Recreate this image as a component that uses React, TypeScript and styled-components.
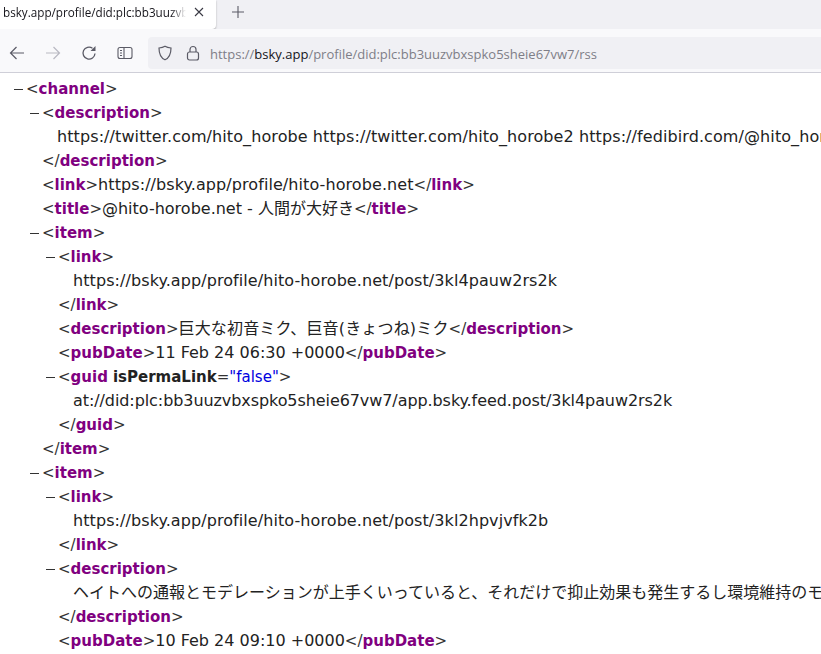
import React from "react";
import styled, { createGlobalStyle } from "styled-components";

const Global = createGlobalStyle`
  html, body { margin: 0; padding: 0; background: #fff; }
  body { width: 821px; height: 654px; overflow: hidden; }
`;

const Page = styled.div`
  width: 821px;
  height: 654px;
  overflow: hidden;
  display: flex;
  flex-direction: column;
  font-family: "Open Sans", "Liberation Sans", sans-serif;
`;

const TabStrip = styled.div`
  height: 29px;
  flex: none;
  display: flex;
  align-items: flex-start;
  background: #f0f0f4;
`;

const Tab = styled.div`
  width: 216px;
  height: 29px;
  background: #fff;
  border-radius: 0 0 4px 0;
  box-shadow: 0 1px 2px rgba(0, 0, 0, 0.3);
  display: flex;
  align-items: center;
  padding: 0 11px 6px 3px;
  box-sizing: border-box;
  gap: 7px;
`;

const TabTitle = styled.div`
  flex: 1;
  overflow: hidden;
  white-space: nowrap;
  font-size: 11.7px;
  color: #15141a;
  mask-image: linear-gradient(to right, #000 92%, transparent);
`;

const NewTab = styled.button`
  border: 0;
  background: none;
  padding: 0;
  margin: 4px 0 0 14px;
  width: 16px;
  height: 16px;
  display: flex;
  color: #5b5b66;
`;

const Toolbar = styled.div`
  height: 44px;
  flex: none;
  display: flex;
  align-items: center;
  background: #f9f9fb;
  border-bottom: 1px solid #cfcfd8;
  box-sizing: border-box;
  padding: 4px 0 0 9px;
`;

const NavButton = styled.div<{ $faded?: boolean }>`
  width: 16px;
  height: 16px;
  margin-right: 20px;
  display: flex;
  color: ${(p) => (p.$faded ? "#b9b9c2" : "#5b5b66")};
`;

const UrlBar = styled.div`
  flex: 1;
  height: 32px;
  margin-left: -5px;
  background: #f0f0f4;
  border-radius: 4px 0 0 4px;
  display: flex;
  align-items: center;
  padding-left: 9px;
`;

const UrlIcon = styled.div`
  width: 16px;
  height: 16px;
  margin-right: 12px;
  display: flex;
  color: #5b5b66;
`;

const Url = styled.div`
  font-size: 13px;
  margin: 2px 0 0 -3px;
  color: #7e7e87;
  white-space: nowrap;
`;

const Host = styled.span`
  color: #15141a;
`;

const Tree = styled.div`
  flex: 1;
  padding: 4px 0 0 26px;
  font-family: "DejaVu Sans", Verdana, "Noto Sans CJK JP", sans-serif;
  font-size: 16px;
  line-height: 24px;
  color: #222;
  white-space: nowrap;
  overflow: hidden;
`;

const Node = styled.div<{ $root?: boolean }>`
  padding-left: ${(p) => (p.$root ? 0 : 16)}px;
`;

const Line = styled.div`
  height: 24px;
  position: relative;
`;

const Dash = styled.span`
  position: absolute;
  left: -12px;
  top: 12px;
  width: 9px;
  height: 1px;
  background: #333;
`;

const Text = styled.div<{ $spacing: number }>`
  height: 24px;
  padding-left: 15px;
  letter-spacing: ${(p) => p.$spacing}px;
`;

const InlineValue = styled.span<{ $spacing: number }>`
  letter-spacing: ${(p) => p.$spacing}px;
`;

const Punct = styled.span`
  font-size: 15px;
  color: #333;
`;

const Name = styled.span`
  color: #800080;
  font-weight: 700;
  font-size: 15px;
`;

const AttrName = styled.span`
  color: #222;
  font-weight: 700;
  font-size: 15px;
`;

const AttrValue = styled.span`
  color: #0000e0;
  font-size: 15px;
`;

const Open = ({ n, attr }: { n: string; attr?: [string, string] }) => (
  <>
    <Punct>&lt;</Punct>
    <Name>{n}</Name>
    {attr && (
      <>
        {" "}
        <AttrName>{attr[0]}</AttrName>
        <Punct>=</Punct>
        <AttrValue>"{attr[1]}"</AttrValue>
      </>
    )}
    <Punct>&gt;</Punct>
  </>
);
const Close = ({ n }: { n: string }) => (
  <>
    <Punct>&lt;/</Punct>
    <Name>{n}</Name>
    <Punct>&gt;</Punct>
  </>
);

const Leaf = ({ n, v, spacing = 0 }: { n: string; v: string; spacing?: number }) => (
  <Node>
    <Line>
      <Open n={n} />
      <InlineValue $spacing={spacing}>{v}</InlineValue>
      <Close n={n} />
    </Line>
  </Node>
);

const Block = ({
  n,
  attr,
  text,
  spacing = 0,
  children,
  root,
  noClose,
}: {
  n: string;
  attr?: [string, string];
  text?: string;
  spacing?: number;
  children?: React.ReactNode;
  root?: boolean;
  noClose?: boolean;
}) => (
  <Node $root={root}>
    <Line>
      <Dash />
      <Open n={n} attr={attr} />
    </Line>
    {text && <Text $spacing={spacing}>{text}</Text>}
    {children}
    {!noClose && (
      <Line>
        <Close n={n} />
      </Line>
    )}
  </Node>
);

export default function App() {
  return (
    <Page>
      <Global />
      <TabStrip>
        <Tab>
          <TabTitle>bsky.app/profile/did:plc:bb3uuzvbxspko5sheie67vw7/rss</TabTitle>
          <svg width="12" height="12" viewBox="0 0 12 12" fill="none" stroke="#3a3a44" strokeWidth="1.1">
            <path d="M2 2l8 8M10 2l-8 8" />
          </svg>
        </Tab>
        <NewTab>
          <svg width="16" height="16" viewBox="0 0 16 16" fill="none" stroke="currentColor" strokeWidth="1.1">
            <path d="M8 2v12M2 8h12" />
          </svg>
        </NewTab>
      </TabStrip>
      <Toolbar>
        <NavButton>
          <svg width="16" height="16" viewBox="0 0 16 16" fill="none" stroke="currentColor" strokeWidth="1.2">
            <path d="M15 8H1.500M7.500 2L1.500 8l6 6" />
          </svg>
        </NavButton>
        <NavButton $faded>
          <svg width="16" height="16" viewBox="0 0 16 16" fill="none" stroke="currentColor" strokeWidth="1.2">
            <path d="M1 8h13.500M8.500 2l6 6-6 6" />
          </svg>
        </NavButton>
        <NavButton>
          <svg width="16" height="16" viewBox="0 0 16 16" fill="none" stroke="currentColor" strokeWidth="1.3">
            <path d="M14 8.500A6 6 0 1 1 11.500 3.200" />
            <path d="M14.500 1v5h-5z" fill="currentColor" stroke="none" />
          </svg>
        </NavButton>
        <NavButton>
          <svg width="16" height="16" viewBox="0 0 16 16" fill="none" stroke="currentColor" strokeWidth="1.1">
            <rect x="1" y="2.500" width="14" height="11" rx="2" />
            <path d="M7 2.500v11M3 5.500h2M3 8h2M3 10.500h2" />
          </svg>
        </NavButton>
        <UrlBar>
          <UrlIcon>
            <svg width="16" height="16" viewBox="0 0 16 16" fill="none" stroke="currentColor" strokeWidth="1.2">
              <path d="M8 1.200c2 1.200 4 1.600 6 1.800 0 6-1.500 9.800-6 11.800C3.500 12.800 2 9 2 3c2-.2 4-.6 6-1.800z" />
            </svg>
          </UrlIcon>
          <UrlIcon>
            <svg width="16" height="16" viewBox="0 0 16 16" fill="none" stroke="currentColor" strokeWidth="1.2">
              <rect x="2.500" y="7" width="11" height="8" rx="2" />
              <path d="M5 7V4.500a3 3 0 0 1 6 0V7" />
            </svg>
          </UrlIcon>
          <Url>
            https://<Host>bsky.app</Host>/profile/did:plc:bb3uuzvbxspko5sheie67vw7/rss
          </Url>
        </UrlBar>
      </Toolbar>
      <Tree>
        <Block n="channel" root noClose>
          <Block n="description" spacing={0.09} text="https://twitter.com/hito_horobe https://twitter.com/hito_horobe2 https://fedibird.com/@hito_horobe" />
          <Leaf n="link" spacing={0.08} v="https://bsky.app/profile/hito-horobe.net" />
          <Leaf n="title" v="@hito-horobe.net - 人間が大好き" />
          <Block n="item">
            <Block n="link" spacing={0.08} text="https://bsky.app/profile/hito-horobe.net/post/3kl4pauw2rs2k" />
            <Leaf n="description" spacing={0.17} v="巨大な初音ミク、巨音(きょつね)ミク" />
            <Leaf n="pubDate" v="11 Feb 24 06:30 +0000" />
            <Block n="guid" attr={["isPermaLink", "false"]} spacing={-0.08} text="at://did:plc:bb3uuzvbxspko5sheie67vw7/app.bsky.feed.post/3kl4pauw2rs2k" />
          </Block>
          <Block n="item" noClose>
            <Block n="link" spacing={0.08} text="https://bsky.app/profile/hito-horobe.net/post/3kl2hpvjvfk2b" />
            <Block n="description" text="ヘイトへの通報とモデレーションが上手くいっていると、それだけで抑止効果も発生するし環境維持のモデレーション" />
            <Leaf n="pubDate" v="10 Feb 24 09:10 +0000" />
          </Block>
        </Block>
      </Tree>
    </Page>
  );
}
